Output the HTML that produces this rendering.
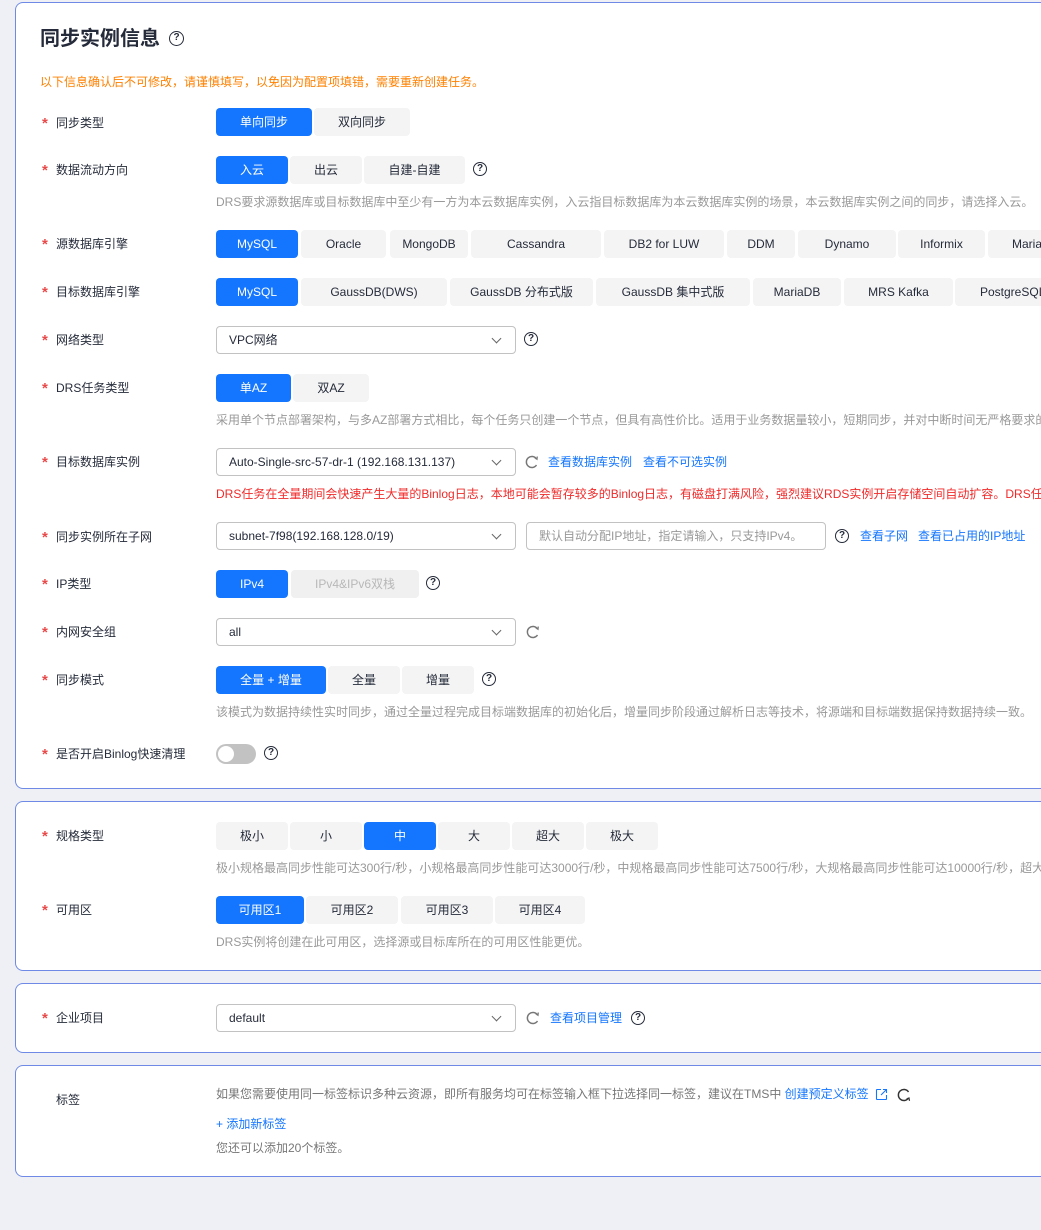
<!DOCTYPE html>
<html><head><meta charset="utf-8"><style>
*{box-sizing:border-box;margin:0;padding:0}
html,body{width:1041px;height:1230px;overflow:hidden;background:#eef0f5;font-family:"Liberation Sans","Noto Sans CJK SC",sans-serif;font-size:12px;color:#252b3a}
.card{position:absolute;left:15px;width:1040px;background:#fff;border:1px solid #6f8ae6;border-radius:8px}
.a{position:absolute;white-space:nowrap}
.lbl{position:absolute;left:56px;white-space:nowrap;font-size:12px;color:#252b3a;line-height:16px}
.lbl b{position:absolute;left:-14px;top:1px;color:#e84a4a;font-weight:bold;font-size:15px;line-height:16px}
.btn{position:absolute;height:28px;line-height:28px;text-align:center;background:#f4f4f4;border-radius:4px;color:#252b3a;white-space:nowrap;overflow:hidden}
.on{background:#1476ff;color:#fff}
.dis{color:#b8b8b8;background:#f0f0f0}
.hint{position:absolute;left:216px;color:#999;white-space:nowrap;line-height:16px}
.sel{position:absolute;left:216px;width:300px;height:28px;border:1px solid #c2c2c2;border-radius:4px;padding-left:12px;line-height:26px;color:#252b3a}
.sel:after{content:"";position:absolute;right:15px;top:8px;width:6px;height:6px;border-right:1px solid #666;border-bottom:1px solid #666;transform:rotate(45deg)}
.q{position:absolute;width:14px;height:14px;border:1.3px solid #252b3a;border-radius:50%;font-size:10px;line-height:12px;text-align:center;font-weight:bold}
.link{position:absolute;color:#1476ff;white-space:nowrap;line-height:16px}
.rf{position:absolute;width:14px;height:14px}
</style></head><body>

<div class="card" style="top:2px;height:787px">
 <div class="a" style="left:24px;top:22px;font-size:20px;font-weight:bold;line-height:28px">同步实例信息</div>
 <div class="q" style="left:153px;top:28px;width:15px;height:15px">?</div>
 <div class="a" style="left:24px;top:71px;color:#ff8000;line-height:16px">以下信息确认后不可修改，请谨慎填写，以免因为配置项填错，需要重新创建任务。</div>
</div>

<div class="card" style="top:801px;height:170px"></div>
<div class="card" style="top:983px;height:70px"></div>
<div class="card" style="top:1065px;height:112px"></div>

<div class="lbl" style="top:115px"><b>*</b>同步类型</div>
<div class="btn on" style="left:216px;top:108px;width:96px">单向同步</div>
<div class="btn" style="left:314px;top:108px;width:96px">双向同步</div>

<div class="lbl" style="top:162px"><b>*</b>数据流动方向</div>
<div class="btn on" style="left:216px;top:156px;width:72px">入云</div>
<div class="btn" style="left:290px;top:156px;width:72px">出云</div>
<div class="btn" style="left:364px;top:156px;width:101px">自建-自建</div>
<div class="q" style="left:473px;top:162px">?</div>
<div class="hint" style="top:194px">DRS要求源数据库或目标数据库中至少有一方为本云数据库实例，入云指目标数据库为本云数据库实例的场景，本云数据库实例之间的同步，请选择入云。</div>

<div class="lbl" style="top:236px"><b>*</b>源数据库引擎</div>
<div class="btn on" style="left:216px;top:230px;width:82px">MySQL</div>
<div class="btn" style="left:301px;top:230px;width:85px">Oracle</div>
<div class="btn" style="left:390px;top:230px;width:78px">MongoDB</div>
<div class="btn" style="left:471px;top:230px;width:130px">Cassandra</div>
<div class="btn" style="left:604px;top:230px;width:120px">DB2 for LUW</div>
<div class="btn" style="left:727px;top:230px;width:68px">DDM</div>
<div class="btn" style="left:798px;top:230px;width:98px">Dynamo</div>
<div class="btn" style="left:898px;top:230px;width:87px">Informix</div>
<div class="btn" style="left:988px;top:230px;width:90px;text-align:left;padding-left:24px">MariaDB</div>

<div class="lbl" style="top:284px"><b>*</b>目标数据库引擎</div>
<div class="btn on" style="left:216px;top:278px;width:82px">MySQL</div>
<div class="btn" style="left:301px;top:278px;width:146px">GaussDB(DWS)</div>
<div class="btn" style="left:450px;top:278px;width:143px">GaussDB 分布式版</div>
<div class="btn" style="left:596px;top:278px;width:154px">GaussDB 集中式版</div>
<div class="btn" style="left:753px;top:278px;width:88px">MariaDB</div>
<div class="btn" style="left:844px;top:278px;width:109px">MRS Kafka</div>
<div class="btn" style="left:955px;top:278px;width:110px;text-align:left;padding-left:25px">PostgreSQL</div>

<div class="lbl" style="top:332px"><b>*</b>网络类型</div>
<div class="sel" style="top:326px">VPC网络</div>
<div class="q" style="left:524px;top:332px">?</div>

<div class="lbl" style="top:380px"><b>*</b>DRS任务类型</div>
<div class="btn on" style="left:216px;top:374px;width:75px">单AZ</div>
<div class="btn" style="left:293px;top:374px;width:76px">双AZ</div>
<div class="hint" style="top:412px">采用单个节点部署架构，与多AZ部署方式相比，每个任务只创建一个节点，但具有高性价比。适用于业务数据量较小，短期同步，并对中断时间无严格要求的场景。</div>

<div class="lbl" style="top:454px"><b>*</b>目标数据库实例</div>
<div class="sel" style="top:448px">Auto-Single-src-57-dr-1 (192.168.131.137)</div>
<svg class="rf" style="left:525px;top:455px" viewBox="0 0 14 14"><path d="M11.5 4A5.5 5.5 0 1 0 11.5 10" fill="none" stroke="#777" stroke-width="1.5"/><path d="M9.5 2.5L12 4.3L12.3 1.5" fill="none" stroke="#777" stroke-width="1.2"/></svg>
<div class="link" style="left:548px;top:454px">查看数据库实例</div>
<div class="link" style="left:643px;top:454px">查看不可选实例</div>
<div class="a" style="left:216px;top:486px;color:#f02a2a;line-height:16px">DRS任务在全量期间会快速产生大量的Binlog日志，本地可能会暂存较多的Binlog日志，有磁盘打满风险，强烈建议RDS实例开启存储空间自动扩容。DRS任务</div>

<div class="lbl" style="top:529px"><b>*</b>同步实例所在子网</div>
<div class="sel" style="top:522px">subnet-7f98(192.168.128.0/19)</div>
<div class="a" style="left:526px;top:522px;width:300px;height:28px;border:1px solid #c2c2c2;border-radius:4px;padding-left:12px;line-height:26px;color:#999">默认自动分配IP地址，指定请输入，只支持IPv4。</div>
<div class="q" style="left:835px;top:529px">?</div>
<div class="link" style="left:860px;top:528px">查看子网</div>
<div class="link" style="left:918px;top:528px">查看已占用的IP地址</div>

<div class="lbl" style="top:576px"><b>*</b>IP类型</div>
<div class="btn on" style="left:216px;top:570px;width:72px">IPv4</div>
<div class="btn dis" style="left:291px;top:570px;width:128px">IPv4&amp;IPv6双栈</div>
<div class="q" style="left:426px;top:576px">?</div>

<div class="lbl" style="top:624px"><b>*</b>内网安全组</div>
<div class="sel" style="top:618px">all</div>
<svg class="rf" style="left:526px;top:625px" viewBox="0 0 14 14"><path d="M11.5 4A5.5 5.5 0 1 0 11.5 10" fill="none" stroke="#777" stroke-width="1.5"/><path d="M9.5 2.5L12 4.3L12.3 1.5" fill="none" stroke="#777" stroke-width="1.2"/></svg>

<div class="lbl" style="top:672px"><b>*</b>同步模式</div>
<div class="btn on" style="left:216px;top:666px;width:110px">全量 + 增量</div>
<div class="btn" style="left:328px;top:666px;width:72px">全量</div>
<div class="btn" style="left:402px;top:666px;width:72px">增量</div>
<div class="q" style="left:482px;top:672px">?</div>
<div class="hint" style="top:704px">该模式为数据持续性实时同步，通过全量过程完成目标端数据库的初始化后，增量同步阶段通过解析日志等技术，将源端和目标端数据保持数据持续一致。</div>

<div class="lbl" style="top:746px"><b>*</b>是否开启Binlog快速清理</div>
<div class="a" style="left:216px;top:744px;width:40px;height:20px;background:#c2c2c2;border-radius:10px"><div style="position:absolute;left:2px;top:2px;width:16px;height:16px;background:#fff;border-radius:50%"></div></div>
<div class="q" style="left:264px;top:746px">?</div>

<div class="lbl" style="top:828px"><b>*</b>规格类型</div>
<div class="btn" style="left:216px;top:822px;width:72px">极小</div>
<div class="btn" style="left:290px;top:822px;width:72px">小</div>
<div class="btn on" style="left:364px;top:822px;width:72px">中</div>
<div class="btn" style="left:438px;top:822px;width:72px">大</div>
<div class="btn" style="left:512px;top:822px;width:72px">超大</div>
<div class="btn" style="left:586px;top:822px;width:72px">极大</div>
<div class="hint" style="top:860px">极小规格最高同步性能可达300行/秒，小规格最高同步性能可达3000行/秒，中规格最高同步性能可达7500行/秒，大规格最高同步性能可达10000行/秒，超大规格</div>

<div class="lbl" style="top:902px"><b>*</b>可用区</div>
<div class="btn on" style="left:216px;top:896px;width:88px">可用区1</div>
<div class="btn" style="left:306px;top:896px;width:92px">可用区2</div>
<div class="btn" style="left:401px;top:896px;width:92px">可用区3</div>
<div class="btn" style="left:495px;top:896px;width:90px">可用区4</div>
<div class="hint" style="top:934px">DRS实例将创建在此可用区，选择源或目标库所在的可用区性能更优。</div>

<div class="lbl" style="top:1010px"><b>*</b>企业项目</div>
<div class="sel" style="top:1004px">default</div>
<svg class="rf" style="left:526px;top:1011px" viewBox="0 0 14 14"><path d="M11.5 4A5.5 5.5 0 1 0 11.5 10" fill="none" stroke="#777" stroke-width="1.5"/><path d="M9.5 2.5L12 4.3L12.3 1.5" fill="none" stroke="#777" stroke-width="1.2"/></svg>
<div class="link" style="left:550px;top:1010px">查看项目管理</div>
<div class="q" style="left:631px;top:1011px">?</div>

<div class="lbl" style="top:1092px">标签</div>
<div class="hint" style="top:1086px;color:#777">如果您需要使用同一标签标识多种云资源，即所有服务均可在标签输入框下拉选择同一标签，建议在TMS中 <span style="color:#1476ff">创建预定义标签</span></div>
<svg class="a" style="left:875px;top:1088px" width="13" height="13" viewBox="0 0 13 13"><path d="M6 1.5H2a.5.5 0 0 0-.5.5v9a.5.5 0 0 0 .5.5h9a.5.5 0 0 0 .5-.5V7M8 1.5h3.5V5M11.5 1.5L6 7" fill="none" stroke="#1476ff" stroke-width="1.1"/></svg>
<svg class="rf" style="left:897px;top:1088px" viewBox="0 0 14 14"><path d="M11.5 4A5.5 5.5 0 1 0 11.5 10" fill="none" stroke="#333" stroke-width="1.5"/><path d="M9.5 11L12 10L12.5 12.8" fill="none" stroke="#333" stroke-width="1.2"/></svg>
<div class="link" style="left:216px;top:1116px">+ 添加新标签</div>
<div class="hint" style="top:1140px;color:#777">您还可以添加20个标签。</div>
</body></html>
